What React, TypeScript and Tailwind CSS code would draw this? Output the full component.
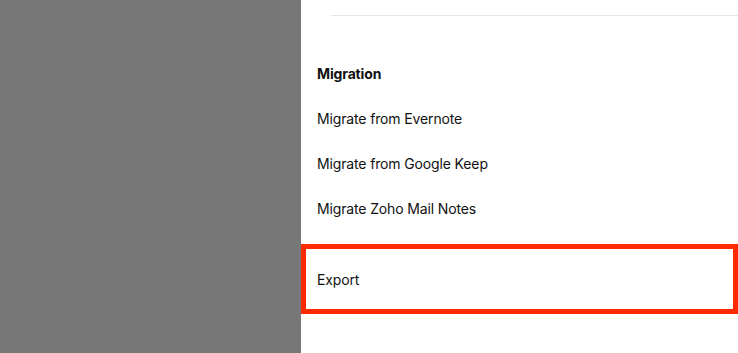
export default function App() {
  const items = ["Migrate from Evernote", "Migrate from Google Keep", "Migrate Zoho Mail Notes"];

  return (
    <div className="flex h-[353px] w-[738px] overflow-hidden bg-[#777777] font-['Inter',sans-serif] text-[#111111]">
      <div className="w-[301px] shrink-0" />
      <div className="flex flex-1 flex-col bg-white">
        <div className="h-[15px] shrink-0" />
        <div className="ml-[30px] h-px shrink-0 bg-[#e6e6e6]" />
        <div className="h-[35px] shrink-0" />
        {/* Migration section */}
        <div className="flex h-[45px] shrink-0 items-center pl-4">
          <span className="text-[14px] font-bold tracking-[-0.01em]">Migration</span>
        </div>
        {items.map((item) => (
          <div key={item} className="flex h-[45px] shrink-0 items-center pl-4 text-[14px] tracking-[-0.01em]">
            {item}
          </div>
        ))}
        <div className="h-[13px] shrink-0" />
        <div className="flex h-[70px] shrink-0 items-center border-[5px] border-[#ff2a00] pl-[11px] text-[14px] tracking-[-0.01em]">
          Export
        </div>
      </div>
    </div>
  );
}
